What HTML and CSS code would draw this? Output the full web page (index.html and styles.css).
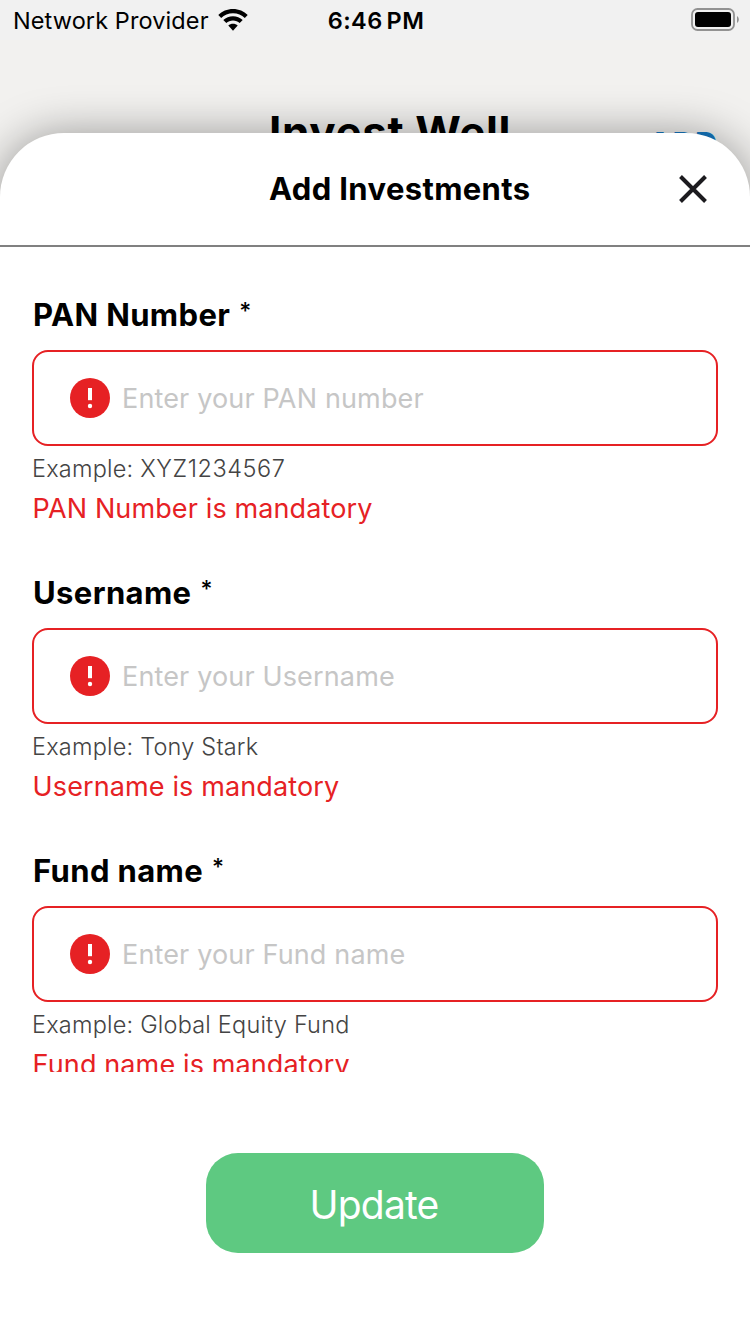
FILE: index.html
```
<!DOCTYPE html>
<html lang="en">
<head>
<meta charset="utf-8">
<title>Add Investments</title>
<link rel="stylesheet" href="styles.css">
</head>
<body>
<div class="screen">
  <div class="status">
    <div class="carrier"><span class="carrier-name">Network Provider</span>
      <svg class="wifi" width="30" height="22" viewBox="0 0 30 22"><path d="M15 0C9.200 0 4 2.200 .3 6L3.200 9C6.200 6 10.400 4.200 15 4.200S23.800 6 26.800 9L29.700 6C26 2.200 20.800 0 15 0Z"/><path d="M15 7.300C11.300 7.300 7.900 8.700 5.300 11.100L8.300 14.100C10.100 12.500 12.400 11.500 15 11.500S19.900 12.500 21.700 14.100L24.700 11.100C22.100 8.700 18.700 7.300 15 7.300Z"/><path d="M15 14.800C13.200 14.800 11.500 15.400 10.300 16.500L15 21.700L19.700 16.500C18.500 15.400 16.800 14.800 15 14.800Z"/></svg>
    </div>
    <span class="time">6:46<span class="meridiem">PM</span></span>
    <svg class="battery" width="48" height="24" viewBox="0 0 48 24"><rect x="1" y="1" width="42" height="21" rx="5.500" fill="none" stroke="#929292" stroke-width="1.800"/><rect x="4" y="4" width="36" height="15" rx="3" /><path d="M46 8C48.400 9.500 48.400 13.500 46 15Z" fill="#929292"/></svg>
  </div>
  <div class="backdrop">
    <span class="app-title">Invest Well</span>
    <span class="app-add">ADD</span>
  </div>
  <div class="sheet">
    <div class="sheet-head">
      <h1 class="sheet-title">Add Investments</h1>
      <svg class="close" width="30" height="30" viewBox="0 0 30 30"><path d="M2.500 2.500L27.500 27.500M27.500 2.500L2.500 27.500"/></svg>
    </div>
    <div class="form">
      <div class="field">
        <div class="label"><span>PAN Number</span><span class="star">*</span></div>
        <div class="input"><svg class="alert" width="40" height="40" viewBox="0 0 40 40"><circle cx="20" cy="20" r="20" fill="#e62124"/><path d="M18 10h4v12.200h-4z" fill="#fff"/><circle cx="20" cy="28" r="2.200" fill="#fff"/></svg><span class="placeholder">Enter your PAN number</span></div>
        <div class="hint">Example: <span class="code">XYZ1234567</span></div>
        <div class="error">PAN Number is mandatory</div>
      </div>
      <div class="field">
        <div class="label"><span>Username</span><span class="star">*</span></div>
        <div class="input"><svg class="alert" width="40" height="40" viewBox="0 0 40 40"><circle cx="20" cy="20" r="20" fill="#e62124"/><path d="M18 10h4v12.200h-4z" fill="#fff"/><circle cx="20" cy="28" r="2.200" fill="#fff"/></svg><span class="placeholder">Enter your Username</span></div>
        <div class="hint">Example: Tony Stark</div>
        <div class="error">Username is mandatory</div>
      </div>
      <div class="field">
        <div class="label"><span>Fund name</span><span class="star">*</span></div>
        <div class="input"><svg class="alert" width="40" height="40" viewBox="0 0 40 40"><circle cx="20" cy="20" r="20" fill="#e62124"/><path d="M18 10h4v12.200h-4z" fill="#fff"/><circle cx="20" cy="28" r="2.200" fill="#fff"/></svg><span class="placeholder">Enter your Fund name</span></div>
        <div class="hint">Example: Global Equity Fund</div>
        <div class="error">Fund name is mandatory</div>
      </div>
    </div>
    <div class="actions"><button class="update">Update</button></div>
  </div>
</div>
</body>
</html>
```
FILE: styles.css
```
* { box-sizing: border-box; }
body { margin: 0; font-family: Inter, "Liberation Sans", sans-serif; color: #000; }
.screen { width: 750px; height: 1334px; overflow: hidden; display: flex; flex-direction: column; background: #f2f1ef; white-space: nowrap; }
.status { height: 40px; flex: none; display: grid; grid-template-columns: 1fr auto 1fr; align-items: center; padding: 0 11px 0 13px; background: #f1f1f1; }
.carrier { display: flex; align-items: center; gap: 9px; }
.carrier-name { font-size: 23.500px; letter-spacing: .1px; line-height: 38px; padding-top: 2px; }
.time { font-size: 23.500px; font-weight: 600; letter-spacing: .4px; line-height: 38px; padding-top: 2px; }
.meridiem { margin-left: 4px; }
.battery { justify-self: end; }
.backdrop { height: 93px; flex: none; display: grid; grid-template-columns: 269px 1fr auto; padding: 68px 32px 0 0; }
.app-title { grid-column: 2; font-size: 44px; font-weight: 700; line-height: 48px; letter-spacing: .6px; }
.app-add { color: #1578c2; font-size: 30px; font-weight: 800; line-height: 36px; padding-top: 17px; letter-spacing: 1px; }
.sheet { position: relative; flex: 1; min-height: 0; display: flex; flex-direction: column; background: #fff; border-radius: 64px 64px 0 0; box-shadow: 0 2px 46px rgba(0, 0, 0, .4); }
.sheet-head { height: 114px; flex: none; display: grid; grid-template-columns: 269px 1fr 30px; align-items: center; padding: 0 42px 0 0; border-bottom: 2px solid #808080; }
.sheet-title { grid-column: 2; margin: 0; font-size: 31px; font-weight: 700; line-height: 40px; letter-spacing: .36px; }
.close { fill: none; stroke: #1c1b1f; stroke-width: 4; stroke-linecap: butt; }
.form { height: 825px; flex: none; overflow: hidden; padding: 48px 32px 0; }
.field { height: 278px; }
.label { display: flex; height: 40px; line-height: 40px; font-size: 31px; font-weight: 700; letter-spacing: .38px; padding-left: 1px; }
.star { font-size: 23px; font-weight: 500; line-height: 32px; margin-left: 9px; }
.input { height: 96px; margin-top: 15px; display: flex; align-items: center; gap: 12px; padding-left: 36px; border: 2px solid #e62124; border-radius: 16px; }
.placeholder { font-size: 27px; color: #c6c6c6; letter-spacing: .15px; }
.hint { margin-top: 7px; height: 32px; line-height: 32px; font-size: 23.500px; font-weight: 300; color: #444; letter-spacing: .2px; }
.code { letter-spacing: .55px; }
.error { margin-top: 6px; height: 36px; line-height: 36px; font-size: 27px; color: #e62124; letter-spacing: .12px; padding-left: .6px; }
.actions { display: flex; justify-content: center; padding-top: 81px; }
.update { width: 338px; height: 100px; border: 0; border-radius: 32px; background: #5ec981; color: #fff; font-family: inherit; font-size: 39px; font-weight: 400; letter-spacing: -.8px; padding: 2px 2px 0 0; }
```
